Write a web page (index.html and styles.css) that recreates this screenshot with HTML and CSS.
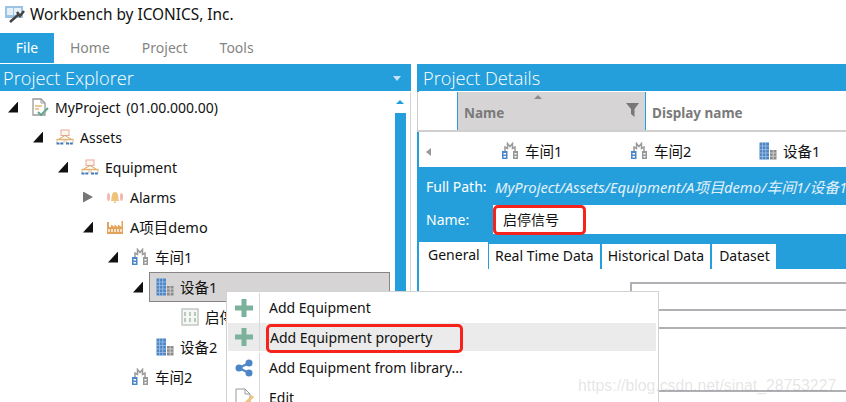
FILE: index.html
```html
<!DOCTYPE html>
<html lang="en">
<head>
    <meta charset="UTF-8">
    <meta name="viewport" content="width=device-width, initial-scale=1.0">
    <title>Workbench by ICONICS, Inc.</title>
    <link rel="stylesheet" href="styles.css">
</head>
<body>
    <!-- Iconos reutilizados -->
    <svg class="defs" width="0" height="0">
        <symbol id="i-org" viewBox="0 0 18 18">
            <rect x="5" y="2" width="8" height="5.500" fill="#fdf6ec" stroke="#e9a79e"/>
            <path d="M9 7.500 L3 11 M9 7.500 L15 11" stroke="#d9a662" fill="none"/>
            <path d="M0.500 11.500 H17.500" stroke="#e0b06c" stroke-width="1.500"/>
            <path d="M1 11.500 V15 M8 11.500 V15 M10 11.500 V15 M17 11.500 V15" stroke="#d8c3a0"/>
            <path d="M0.500 15.500 H7.500 M10 15.500 H17.500" stroke="#3f78bd" stroke-width="2" stroke-dasharray="3 .8"/>
        </symbol>
        <symbol id="i-shop" viewBox="0 0 18 18">
            <path d="M4 9 V5 L6.500 6.500 V1.500 L9 4.500 L11.500 1.500 V6.500 L14 5 V9" fill="none" stroke="#9a9a9a" stroke-width="1.500"/>
            <rect x="1" y="9" width="5.500" height="8" fill="#4d86c6"/>
            <rect x="2.500" y="11" width="2.500" height="1.500" fill="#fff"/>
            <rect x="2.500" y="14" width="2.500" height="1.500" fill="#fff"/>
            <rect x="12" y="9" width="5" height="8" fill="#979797"/>
            <rect x="13.500" y="11" width="2" height="1.500" fill="#fff"/>
            <rect x="13.500" y="14" width="2" height="1.500" fill="#fff"/>
        </symbol>
        <symbol id="i-building" viewBox="0 0 18 18">
            <rect x="0.500" y="0.500" width="9.500" height="17" fill="#4f87c6"/>
            <path d="M3.500 0.500 V17.500 M6.700 0.500 V17.500 M0.500 4 H10 M0.500 7.500 H10 M0.500 11 H10 M0.500 14.500 H10" stroke="#a9c6e6" stroke-width=".7"/>
            <rect x="11" y="8" width="6.500" height="9.500" fill="#8b8b8b"/>
            <path d="M14.200 8 V17.500 M11 11 H17.500 M11 14.200 H17.500" stroke="#dcdcdc" stroke-width=".8"/>
        </symbol>
        <symbol id="i-plus" viewBox="0 0 18 18">
            <path d="M6.500 0 H11.500 V6.500 H18 V11.500 H11.500 V18 H6.500 V11.500 H0 V6.500 H6.500 Z" fill="#7cb19c"/>
        </symbol>
    </svg>

    <header class="title-bar">
        <svg class="app-icon" width="20" height="17" viewBox="0 0 20 17">
            <rect x="0" y="0" width="18" height="12" fill="#9cc3e4"/>
            <rect x="2" y="2" width="6" height="7" fill="#e6f0f8"/>
            <rect x="9" y="2" width="7" height="7" fill="#e6f0f8"/>
            <path d="M5 16 L13 9 M12 6 L15 10 L19 5" stroke="#444" stroke-width="2.500" fill="none"/>
        </svg>
        <span>Workbench by ICONICS, Inc.</span>
    </header>

    <nav class="menu-bar">
        <a class="menu-tab active">File</a>
        <a class="menu-tab">Home</a>
        <a class="menu-tab">Project</a>
        <a class="menu-tab">Tools</a>
    </nav>

    <main class="workspace">
        <section class="explorer">
            <div class="panel-title">
                <span>Project Explorer</span>
                <i class="title-caret"></i>
            </div>
            <div class="explorer-body">
                <ul class="tree">
                    <li class="row lvl-0">
                        <i class="arrow open"></i>
                        <svg class="row-icon" viewBox="0 0 18 18">
                            <path d="M2 1 H10 L14 5 V17 H2 Z" fill="#fff" stroke="#999" stroke-width="1.300"/>
                            <path d="M10 1 V5 H14" fill="none" stroke="#999"/>
                            <path d="M4 8 H11 M4 11 H8" stroke="#e5b56f" stroke-width="1.300"/>
                            <path d="M7 14 L10 17 L17 10" fill="none" stroke="#62a78c" stroke-width="2"/>
                        </svg>
                        <span class="wide">MyProject (01.00.000.00)</span>
                    </li>
                    <li class="row lvl-1">
                        <i class="arrow open"></i>
                        <svg class="row-icon"><use href="#i-org"/></svg>
                        <span>Assets</span>
                    </li>
                    <li class="row lvl-2">
                        <i class="arrow open"></i>
                        <svg class="row-icon"><use href="#i-org"/></svg>
                        <span>Equipment</span>
                    </li>
                    <li class="row lvl-3">
                        <i class="arrow closed"></i>
                        <svg class="row-icon" viewBox="0 0 18 18">
                            <ellipse cx="2.500" cy="9" rx="1.500" ry="4" fill="#f0b8b0"/>
                            <ellipse cx="15.500" cy="9" rx="1.500" ry="4" fill="#f0b8b0"/>
                            <path d="M5 13 C6 10 5 4 9 4 C13 4 12 10 13 13 Z" fill="#efc37c"/>
                            <rect x="8" y="13.500" width="2" height="1.500" fill="#efc37c"/>
                        </svg>
                        <span>Alarms</span>
                    </li>
                    <li class="row lvl-3">
                        <i class="arrow open"></i>
                        <svg class="row-icon" viewBox="0 0 18 18">
                            <path d="M1 4 V16 H17 V3 L15.500 3 V9 L12 6.500 V9 L8.500 6.500 V9 L5 6.500 V9 L3 9 V4 Z" fill="#e3a35a"/>
                            <path d="M3 11 V14 M6 11 V14 M9 11 V14 M12 11 V14 M15 11 V14" stroke="#fff" stroke-width="1.300"/>
                        </svg>
                        <span class="cjk">A项目demo</span>
                    </li>
                    <li class="row lvl-4">
                        <i class="arrow open"></i>
                        <svg class="row-icon"><use href="#i-shop"/></svg>
                        <span class="cjk">车间1</span>
                    </li>
                    <li class="row lvl-5 selected">
                        <i class="arrow open"></i>
                        <svg class="row-icon"><use href="#i-building"/></svg>
                        <span class="cjk">设备1</span>
                    </li>
                    <li class="row lvl-6">
                        <i class="arrow none"></i>
                        <svg class="row-icon" viewBox="0 0 18 18">
                            <rect x="1" y="1" width="16" height="16" fill="#f4f8f4" stroke="#c4c8c4" stroke-width="1.500"/>
                            <path d="M4 4 V8 M9 4 V8 M14 4 V8 M4 10 V14 M9 10 V14 M14 10 V14" stroke="#9aa59a" stroke-width="1.200"/>
                        </svg>
                        <span class="cjk">启停信号</span>
                    </li>
                    <li class="row lvl-5">
                        <i class="arrow none"></i>
                        <svg class="row-icon"><use href="#i-building"/></svg>
                        <span class="cjk">设备2</span>
                    </li>
                    <li class="row lvl-4">
                        <i class="arrow none"></i>
                        <svg class="row-icon"><use href="#i-shop"/></svg>
                        <span class="cjk">车间2</span>
                    </li>
                </ul>
                <div class="scroll-track">
                    <i class="scroll-up"></i>
                    <div class="scroll-thumb"></div>
                </div>
            </div>
        </section>

        <section class="details">
            <div class="panel-title">
                <span>Project Details</span>
            </div>
            <div class="grid-head">
                <div class="head-blank"></div>
                <div class="head-cell sorted">
                    <i class="sort-caret"></i>
                    <span>Name</span>
                    <svg class="filter-icon" width="13" height="14" viewBox="0 0 13 14">
                        <path d="M0 0 H13 L8.500 6 V14 L5 11 V6 Z" fill="#777"/>
                    </svg>
                </div>
                <div class="head-cell plain"><span>Display name</span></div>
            </div>
            <div class="crumbs">
                <i class="crumb-back"></i>
                <div class="crumb"><svg class="row-icon"><use href="#i-shop"/></svg><span class="cjk">车间1</span></div>
                <div class="crumb"><svg class="row-icon"><use href="#i-shop"/></svg><span class="cjk">车间2</span></div>
                <div class="crumb"><svg class="row-icon"><use href="#i-building"/></svg><span class="cjk">设备1</span></div>
            </div>
            <div class="item-head">
                <div class="path-line">
                    <span class="item-label">Full Path:</span>
                    <span class="path-value">MyProject/Assets/Equipment/A项目demo/车间1/设备1</span>
                </div>
                <div class="name-line">
                    <span class="item-label">Name:</span>
                    <div class="name-input"><span class="name-value">启停信号</span></div>
                </div>
                <div class="tabs">
                    <a class="tab active">General</a>
                    <a class="tab">Real Time Data</a>
                    <a class="tab">Historical Data</a>
                    <a class="tab">Dataset</a>
                </div>
            </div>
            <div class="form">
                <label class="form-label">Display Name:</label>
                <div class="form-box"></div>
                <label class="form-label">Description:</label>
                <div class="form-box tall"></div>
            </div>
        </section>
    </main>

    <!-- Menu contextual -->
    <ul class="context-menu">
        <li class="menu-item">
            <span class="menu-icon"><svg width="18" height="18"><use href="#i-plus"/></svg></span>
            <span class="menu-text">Add Equipment</span>
        </li>
        <li class="menu-item hover">
            <span class="menu-icon"><svg width="18" height="18"><use href="#i-plus"/></svg></span>
            <span class="menu-text marked">Add Equipment property</span>
        </li>
        <li class="menu-item">
            <span class="menu-icon">
                <svg width="18" height="18" viewBox="0 0 18 18">
                    <path d="M4 9 L14 4 M4 9 L14 14" stroke="#4d86c6" stroke-width="2"/>
                    <circle cx="4" cy="9" r="3.500" fill="#4d86c6"/>
                    <circle cx="14" cy="4" r="3.500" fill="#4d86c6"/>
                    <circle cx="14" cy="14" r="3.500" fill="#4d86c6"/>
                </svg>
            </span>
            <span class="menu-text">Add Equipment from library...</span>
        </li>
        <li class="menu-item">
            <span class="menu-icon">
                <svg width="20" height="20" viewBox="0 0 20 20">
                    <path d="M2 1 H11 L16 6 V20 H2 Z" fill="#fff" stroke="#999"/>
                    <path d="M11 1 V6 H16" fill="none" stroke="#999"/>
                    <path d="M9 18 L19 8" stroke="#efc37c" stroke-width="3"/>
                </svg>
            </span>
            <span class="menu-text">Edit</span>
        </li>
    </ul>

    <div class="watermark">https://blog.csdn.net/sinat_28753227</div>
</body>
</html>
```

FILE: styles.css
```css
/* Estilo general de la pagina */
* {
    box-sizing: border-box;
}

body {
    font-family: "Noto Sans", "Noto Sans CJK SC", sans-serif;
    font-size: 14px;
    margin: 0;
    width: 846px;
    height: 402px;
    overflow: hidden;
    position: relative;
    background-color: #ffffff;
    color: #111111;
}

ul {
    list-style: none;
    margin: 0;
    padding: 0;
}

.defs {
    position: absolute;
}

.cjk {
    font-size: 14.500px;
    margin-top: -2px;
}

.wide {
    word-spacing: 2px;
}

/* Barra de titulo */
.title-bar {
    height: 33px;
    display: flex;
    align-items: center;
    gap: 5px;
    padding: 0 0 4px 5px;
    font-size: 15.400px;
}

/* Menu principal */
.menu-bar {
    height: 30px;
    display: flex;
    font-size: 14px;
    margin-bottom: 1px;
}

.menu-tab {
    padding: 0 16px 2px;
    display: flex;
    align-items: center;
    justify-content: center;
    color: #858585;
}

.menu-tab.active {
    width: 54px;
    padding: 0 0 2px;
    background-color: #259fdb;
    color: #ffffff;
}

.workspace {
    display: flex;
    gap: 6px;
}

.panel-title {
    height: 27px;
    background-color: #259fdb;
    color: #ffffff;
    font-family: "Open Sans", sans-serif;
    font-weight: 300;
    font-size: 18.200px;
    line-height: 27px;
    padding: 1px 0 0 3px;
    display: flex;
    align-items: center;
    justify-content: space-between;
}

/* Panel izquierdo */
.explorer {
    width: 411px;
    flex: none;
}

.title-caret {
    width: 0;
    height: 0;
    border-left: 4px solid transparent;
    border-right: 4px solid transparent;
    border-top: 5px solid #c5e3f4;
    margin-right: 10px;
}

.explorer-body {
    display: flex;
    height: 311px;
    margin-top: 1px;
    border-right: 1px solid #d4d4d4;
    overflow: hidden;
}

.tree {
    flex: 1;
}

.row {
    height: 30px;
    display: flex;
    align-items: center;
}

.lvl-0 { padding-left: 8px; }
.lvl-1 { padding-left: 33px; }
.lvl-2 { padding-left: 58px; }
.lvl-3 { padding-left: 83px; }
.lvl-4 { padding-left: 108px; }
.lvl-5 { padding-left: 133px; }
.lvl-6 { padding-left: 158px; }

.row.selected {
    margin: 0 2px 0 149px;
    padding-left: 0;
    position: relative;
    background-color: #d6d4d5;
    border: 1px solid #858585;
    height: 30px;
}

.selected .arrow {
    position: absolute;
    left: -17px;
}

.selected .row-icon {
    margin-left: 6px;
}

.arrow {
    flex: none;
    width: 10px;
    height: 11px;
    margin-right: 13px;
}

.arrow.open {
    background-color: #111111;
    clip-path: polygon(100% 0, 100% 100%, 0 100%);
}

.arrow.closed {
    background-color: #777777;
    clip-path: polygon(0 0, 100% 50%, 0 100%);
}

.row-icon {
    flex: none;
    width: 18px;
    height: 18px;
    margin-right: 6px;
}

.scroll-track {
    width: 16px;
    flex: none;
    margin-right: 2px;
    display: flex;
    flex-direction: column;
    align-items: center;
}

.scroll-up {
    width: 0;
    height: 0;
    margin-top: 8px;
    border-left: 4px solid transparent;
    border-right: 4px solid transparent;
    border-bottom: 4px solid #259fdb;
}

.scroll-thumb {
    width: 11px;
    flex: 1;
    margin-top: 9px;
    background-color: #259fdb;
}

/* Panel derecho */
.details {
    flex: 1;
    min-width: 0;
    position: relative;
    border-left: 2px solid #259fdb;
    height: 228px;
}

.details .panel-title {
    margin-left: -2px;
    padding-left: 6px;
}

.grid-head {
    display: flex;
    height: 40px;
    margin-top: 1px;
    margin-left: -2px;
    border-left: 1px solid #cccccc;
    border-bottom: 2px solid #cfcfcf;
    background: #ffffff;
}

.head-blank {
    width: 39px;
}

.head-cell {
    display: flex;
    align-items: center;
    padding: 3px 0 0 6px;
    font-weight: 700;
    font-size: 13.500px;
    color: #7a7a7a;
    border-left: 1px solid #259fdb;
}

.head-cell.sorted {
    width: 188px;
    position: relative;
    background-color: #d6d4d5;
}

.head-cell.plain {
    flex: 1;
}

.sort-caret {
    position: absolute;
    left: 76px;
    top: 3px;
    width: 0;
    height: 0;
    border-left: 4px solid transparent;
    border-right: 4px solid transparent;
    border-bottom: 4px solid #8a8a8a;
}

.filter-icon {
    position: absolute;
    right: 6px;
    top: 11px;
}

.crumbs {
    height: 35px;
    display: flex;
    align-items: center;
    position: relative;
    padding: 3px 0 0 82px;
    overflow: hidden;
}

.crumb-back {
    position: absolute;
    left: 7px;
    top: 16px;
    width: 0;
    height: 0;
    border-top: 4px solid transparent;
    border-bottom: 4px solid transparent;
    border-right: 5px solid #999999;
}

.crumb {
    width: 129px;
    flex: none;
    display: flex;
    align-items: center;
}

.item-head {
    height: 102px;
    margin-left: -2px;
    background-color: #259fdb;
    color: #ffffff;
    padding-top: 8px;
    white-space: nowrap;
    overflow: hidden;
}

.item-label {
    display: inline-block;
    width: 69px;
    padding-left: 9px;
    font-size: 14px;
    flex: none;
}

.path-line {
    height: 24px;
    line-height: 24px;
    display: flex;
}

.path-value {
    font-style: italic;
    color: #e1f1fa;
    font-size: 14.800px;
    padding-left: 9px;
}

.name-line {
    display: flex;
    align-items: center;
    height: 30px;
    margin-top: 5px;
}

.item-label + .name-input {
    margin-left: 7px;
}

.name-input {
    flex: 1;
    height: 29px;
    background-color: #ffffff;
    color: #111111;
    display: flex;
}

.name-value {
    width: 93px;
    height: 30px;
    border: 3px solid #f5231c;
    border-radius: 5px;
    padding-left: 7px;
    line-height: 23px;
}

.tabs {
    display: flex;
    align-items: flex-end;
    gap: 2px;
    height: 29px;
    margin-top: 7px;
    padding-left: 2px;
    color: #111111;
}

.tab {
    height: 25px;
    line-height: 24px;
    padding: 0 6px;
    background-color: #ffffff;
    margin-bottom: 1px;
}

.tab:last-child {
    padding: 0 6px 0 7px;
}

.tab.active {
    width: 69px;
    height: 28px;
    margin-bottom: 0;
    padding: 0 0 0 9px;
    line-height: 26px;
    margin-right: -1px;
}

.form {
    display: grid;
    grid-template-columns: 200px 1fr;
    row-gap: 8px;
    padding-left: 11px;
    padding-top: 13px;
    height: 130px;
}

.form-label {
    padding-top: 6px;
    font-size: 14px;
}

.form-box {
    height: 29px;
    border: 2px solid #b0b0b4;
    border-right: none;
}

.form-box.tall {
    height: 65px;
}

/* Menu contextual */
.context-menu {
    position: absolute;
    left: 226px;
    top: 291px;
    width: 433px;
    height: 120px;
    padding: 1px 2px 0 1px;
    background-color: #ffffff;
    border: 1px solid #d2d2d2;
}

.menu-item {
    height: 30px;
    display: flex;
    align-items: center;
}

.menu-item.hover {
    background-color: #ebebeb;
    height: 28px;
    margin-bottom: 2px;
}

.menu-icon {
    width: 32px;
    height: 100%;
    display: flex;
    align-items: center;
    justify-content: center;
    border-right: 1px solid #d8d8d8;
    flex: none;
}

.menu-text {
    padding-left: 9px;
    margin-top: -2px;
}

.menu-text.marked {
    align-self: flex-start;
    margin: 1px 0 0 6px;
    padding: 0 2px 0 1px;
    width: 197px;
    height: 29px;
    line-height: 21px;
    border: 3px solid #f5231c;
    border-radius: 5px;
}

.watermark {
    position: absolute;
    left: 578px;
    top: 377px;
    font-family: "Liberation Sans", sans-serif;
    font-size: 15.800px;
    color: rgba(120, 120, 120, 0.2);
}
```
